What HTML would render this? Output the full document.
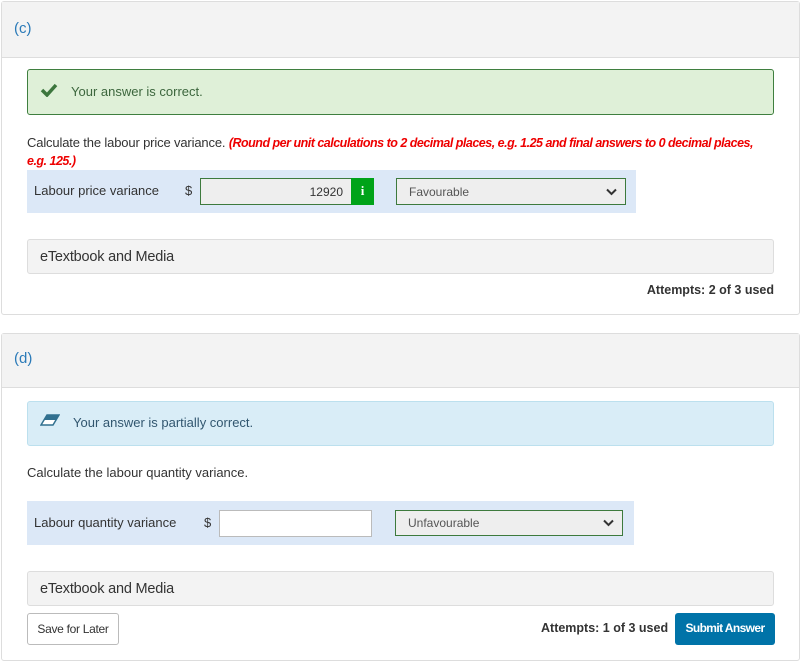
<!DOCTYPE html>
<html><head><style>
*{box-sizing:border-box;margin:0;padding:0}
body{width:802px;height:662px;background:#fff;font-family:"Liberation Sans",sans-serif;font-size:13px;color:#333;position:relative;overflow:hidden}
.abs{position:absolute}
.card{position:absolute;left:1px;width:799px;border:1px solid #ddd;border-radius:3px;background:#fff}
.hdr{position:absolute;left:0;top:0;width:100%;background:#f3f3f3;border-bottom:1px solid #ddd;color:#2a7ab8;font-size:15px}
.box{position:absolute;left:27px;width:747px;border-radius:3px}
.etb{background:#f3f3f3;border:1px solid #ddd;font-size:14.5px;color:#333;padding-left:12px;display:flex;align-items:center;letter-spacing:-0.2px}
.row{position:absolute;left:27px;background:#dce8f7}
.sel{position:absolute;background:#eee;border:1px solid #3d7a3d;font-size:12px;color:#555;padding-left:12px;display:flex;align-items:center}
.chev{position:absolute;right:8px;top:50%;margin-top:-4px}
</style></head><body>
<div class="card" style="top:1px;height:314px">
 <div class="hdr" style="height:56px;padding:18px 0 0 12px">(c)</div>
</div>
<div class="box" style="top:69px;height:46px;background:#dff0d8;border:1px solid #3f7f3f"></div>
<svg class="abs" style="left:40px;top:83px" width="18" height="14" viewBox="0 0 18 14"><path d="M2 7 L7 12 L16 2" stroke="#3c763d" stroke-width="3.5" fill="none"/></svg>
<div class="abs" style="left:71px;top:84px;color:#3c663d">Your answer is correct.</div>
<div class="abs" style="left:27px;top:134px;width:742px;line-height:18px;letter-spacing:-0.15px">Calculate the labour price variance. <i style="color:#e00;font-weight:bold;letter-spacing:-0.5px;font-size:12.5px">(Round per unit calculations to 2 decimal places, e.g. 1.25 and final answers to 0 decimal places, e.g. 125.)</i></div>
<div class="row" style="top:170px;width:609px;height:43px"></div>
<div class="abs" style="left:34px;top:183px">Labour price variance</div>
<div class="abs" style="left:185px;top:183px">$</div>
<div class="abs" style="left:200px;top:178px;width:174px;height:27px;background:#eee;border:1px solid #3d7a3d;font-size:12px;text-align:right;padding:6px 30px 0 0">12920</div>
<div class="abs" style="left:351px;top:178px;width:23px;height:27px;background:#00a319;color:#fff;font-weight:bold;text-align:center;padding-top:5px;font-family:'Liberation Serif',serif">i</div>
<div class="sel" style="left:396px;top:178px;width:230px;height:27px">Favourable<svg class="chev" width="11" height="8" viewBox="0 0 11 8"><path d="M1 1.5 L5.5 6 L10 1.5" stroke="#333" stroke-width="2" fill="none"/></svg></div>
<div class="box etb" style="top:239px;height:35px">eTextbook and Media</div>
<div class="abs" style="right:28px;top:283px;font-weight:bold;color:#333;font-size:12.5px">Attempts: 2 of 3 used</div>

<div class="card" style="top:333px;height:328px">
 <div class="hdr" style="height:54px;padding:16px 0 0 12px">(d)</div>
</div>
<div class="box" style="top:401px;height:45px;background:#d9edf7;border:1px solid #bce0ee"></div>
<svg class="abs" style="left:40px;top:414px" width="20" height="12" viewBox="0 0 20 12"><path d="M7 1 H19 L13 11 H1 Z" fill="#fff" stroke="#31708f" stroke-width="1.5"/><path d="M7 1 H19 L16 6 H4 Z" fill="#31708f"/></svg>
<div class="abs" style="left:73px;top:415px;color:#31566f">Your answer is partially correct.</div>
<div class="abs" style="left:27px;top:465px">Calculate the labour quantity variance.</div>
<div class="row" style="top:501px;width:607px;height:44px"></div>
<div class="abs" style="left:34px;top:515px">Labour quantity variance</div>
<div class="abs" style="left:204px;top:515px">$</div>
<div class="abs" style="left:219px;top:510px;width:153px;height:27px;background:#fff;border:1px solid #bbb"></div>
<div class="sel" style="left:395px;top:510px;width:228px;height:26px">Unfavourable<svg class="chev" width="11" height="8" viewBox="0 0 11 8"><path d="M1 1.5 L5.5 6 L10 1.5" stroke="#333" stroke-width="2" fill="none"/></svg></div>
<div class="box etb" style="top:571px;height:35px">eTextbook and Media</div>
<div class="abs" style="left:27px;top:613px;width:92px;height:32px;border:1px solid #bbb;border-radius:3px;font-size:12px;text-align:center;padding-top:8px;color:#333;letter-spacing:-0.3px">Save for Later</div>
<div class="abs" style="left:541px;top:621px;font-weight:bold;font-size:12.5px">Attempts: 1 of 3 used</div>
<div class="abs" style="left:675px;top:613px;width:100px;height:32px;background:#0073a8;border-radius:3px;color:#fff;font-size:12px;font-weight:bold;text-align:center;padding-top:8px;letter-spacing:-0.6px;white-space:nowrap">Submit Answer</div>
</body></html>
